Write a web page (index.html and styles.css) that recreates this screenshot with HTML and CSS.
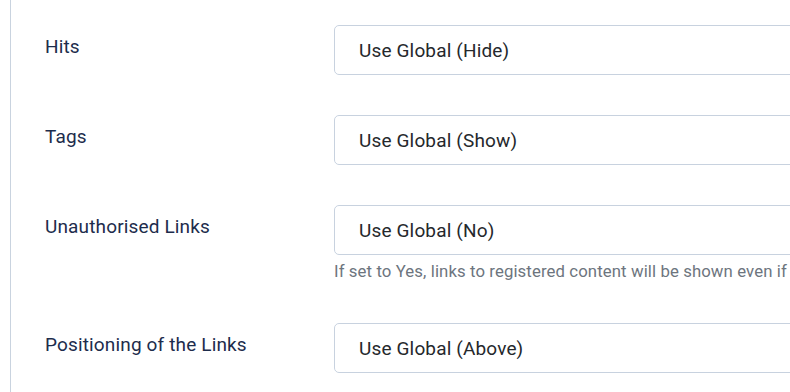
FILE: index.html
```html
<!DOCTYPE html>
<html>
    <head>
        <meta name="viewport" content="width=device-width, initial-scale=1"/>
        <link rel="stylesheet" href="styles.css">
    </head>

    <body>
        <div class="options">
            <div class="control-group">
                <label class="control-group__label" for="show_hits">Hits</label>
                <div class="control-group__controls">
                    <select id="show_hits" class="form-select">
                        <option>Use Global (Hide)</option>
                        <option>Hide</option>
                        <option>Show</option>
                    </select>
                </div>
            </div>
            <div class="control-group">
                <label class="control-group__label" for="show_tags">Tags</label>
                <div class="control-group__controls">
                    <select id="show_tags" class="form-select">
                        <option>Use Global (Show)</option>
                        <option>Hide</option>
                        <option>Show</option>
                    </select>
                </div>
            </div>
            <div class="control-group">
                <label class="control-group__label" for="show_noauth">Unauthorised Links</label>
                <div class="control-group__controls">
                    <select id="show_noauth" class="form-select">
                        <option>Use Global (No)</option>
                        <option>No</option>
                        <option>Yes</option>
                    </select>
                    <div class="form-text">If set to Yes, links to registered content will be shown even if you are not logged in.</div>
                </div>
            </div>
            <div class="control-group">
                <label class="control-group__label" for="urls_position">Positioning of the Links</label>
                <div class="control-group__controls">
                    <select id="urls_position" class="form-select">
                        <option>Use Global (Above)</option>
                        <option>Above</option>
                        <option>Below</option>
                    </select>
                </div>
            </div>
        </div>
    </body>
</html>
```

FILE: styles.css
```css
body, html {
    margin: 0;
    box-sizing: border-box;
    font-family: Roboto, "Liberation Sans", sans-serif;
    font-size: 19px;
    -webkit-font-smoothing: antialiased;
    color: #22262a;
    background-color: #fff;
}

* {
    box-sizing: border-box;
}

html, body {
    overflow: hidden;
    height: 392px;
}

.options {
    margin-left: 10px;
    border-left: 1px solid #c9d3df;
    padding: 25px 0 0 34px;
    height: 392px;
    overflow: hidden;
}

.control-group {
    display: grid;
    grid-template-columns: 289px 1fr;
    margin-bottom: 40px;
}

.control-group__controls {
    min-width: 0;
    overflow: hidden;
    margin-right: -12px;
}

.control-group__label {
    padding-top: 8px;
    line-height: 27px;
    letter-spacing: 0.15px;
    color: #1d2c4c;
}

.form-select {
    display: block;
    width: 100%;
    -webkit-appearance: none;
    appearance: none;
    font-family: inherit;
    font-size: 19px;
    letter-spacing: 0.15px;
    line-height: 27px;
    color: #25282c;
    padding: 11px 24px 10px 24px;
    background-color: #fff;
    border: 1px solid #c8d2df;
    border-radius: 5px;
    outline: none;
}

.form-text {
    margin-top: 4px;
    font-size: 16.75px;
    letter-spacing: 0.1px;
    line-height: 24px;
    color: #6d757e;
    white-space: nowrap;
    overflow: hidden;
}
```
